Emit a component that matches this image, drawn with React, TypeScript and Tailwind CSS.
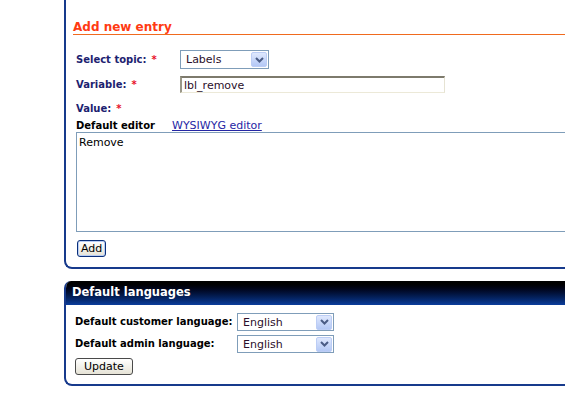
// Admin screen: "Add new entry" form + "Default languages" box (XP look)

const FONT = "font-['DejaVu_Sans','Liberation_Sans',sans-serif]"
const LABEL = 'text-[10px] font-bold text-[#1c2270] leading-none'
const PANEL_BORDER = 'border-[#173a8c]'

// --- Dropdown mirip select bawaan Windows XP ---

function XpSelect({ value, className }: { value: string; className?: string }) {
  return (
    <div
      className={`flex items-center justify-between border border-[#7f9db9] bg-white pl-[5px] pr-[1px] ${className ?? ''}`}
    >
      <span className="text-[11px] text-[#2b0f2b] leading-none">{value}</span>
      <div className="flex h-[15px] w-[16px] items-center justify-center rounded-[2px] border border-[#bccdf5] bg-linear-to-b from-[#dfe8fd] to-[#b4c8f5]">
        <svg width="9" height="6" viewBox="0 0 9 6">
          <path d="M1 1 L4.5 4.5 L8 1" fill="none" stroke="#4a5c85" strokeWidth="2" />
        </svg>
      </div>
    </div>
  )
}

function Req() {
  return <span className="ml-[5px] text-[#e8102a]">*</span>
}

function XpButton({ children, primary }: { children: React.ReactNode; primary?: boolean }) {
  return (
    <button
      className={`h-[17px] rounded-[3px] border text-[11px] leading-none text-black bg-linear-to-b from-white to-[#e6e3d6] ${
        primary ? 'border-[#0a2f7a] px-[3px] shadow-[inset_0_0_0_1px_#b8cdf5]' : 'border-[#4a4a4a] px-[8px]'
      }`}
    >
      {children}
    </button>
  )
}

export default function App() {
  return (
    <div className={`w-[565px] h-[397px] overflow-hidden bg-white ${FONT}`}>
      <div className="pl-[64px]">
        {/* Panel atas: form entri baru */}
        <div className={`w-[560px] border-l-2 border-b-2 ${PANEL_BORDER} rounded-bl-[8px] pt-[21px] pb-[10px] pl-[7px]`}>
          <h2 className="h-[14px] border-b border-[#f06a1e] text-[12px] font-bold leading-[13px] text-[#ff3a12]">
            Add new entry
          </h2>

          <div className="ml-[3px] flex flex-col">
            <div className="mt-[15px] flex h-[19px] items-center">
              <span className={`${LABEL} w-[104px]`}>
                Select topic:<Req />
              </span>
              <XpSelect value="Labels" className="h-[19px] w-[89px]" />
            </div>

            <div className="mt-[7px] flex h-[17px] items-center">
              <span className={`${LABEL} w-[104px]`}>
                Variable:<Req />
              </span>
              <div className="flex h-[17px] w-[265px] items-center border-t-2 border-l-2 border-t-[#7d7a6c] border-l-[#9b9888] border-r border-b border-r-[#e6e3d3] border-b-[#ece9d8] pl-[2px]">
                <span className="text-[11px] leading-none text-[#2b0f2b]">lbl_remove</span>
              </div>
            </div>

            <div className="mt-[7px] flex h-[18px] items-center">
              <span className={LABEL}>
                Value:<Req />
              </span>
            </div>

            <div className="mt-[1px] flex h-[13px] items-center">
              <span className="w-[96px] text-[10px] font-bold leading-none text-black">Default editor</span>
              <a className="text-[11px] leading-none text-[#2626a4] underline">WYSIWYG editor</a>
            </div>

            <div className="h-[100px] border border-[#7f9db9] px-[2px] pt-[4px] text-[11px] leading-none text-black">
              Remove
            </div>

            <div className="mt-[8px] flex pl-[1px]">
              <XpButton primary>Add</XpButton>
            </div>
          </div>
        </div>

        {/* Panel bawah: bahasa default */}
        <div className={`mt-[12px] w-[560px] border-l-2 border-b-2 ${PANEL_BORDER} rounded-bl-[8px] rounded-tl-[7px] overflow-hidden`}>
          <div className="flex h-[24px] items-center bg-linear-to-b from-[#000000] to-[#0b3d9c] pl-[6px]">
            <span className="text-[11.5px] font-bold leading-none text-white">Default languages</span>
          </div>

          <div className="flex flex-col gap-[4px] pl-[9px] pt-[8px] pb-[9px]">
            <div className="flex h-[18px] items-center">
              <span className="w-[162px] text-[10px] font-bold leading-none text-black">Default customer language:</span>
              <XpSelect value="English" className="h-[18px] w-[97px]" />
            </div>
            <div className="flex h-[18px] items-center">
              <span className="w-[162px] text-[10px] font-bold leading-none text-black">Default admin language:</span>
              <XpSelect value="English" className="h-[18px] w-[97px]" />
            </div>
            <div className="mt-[1px] flex">
              <XpButton>Update</XpButton>
            </div>
          </div>
        </div>
      </div>
    </div>
  )
}
